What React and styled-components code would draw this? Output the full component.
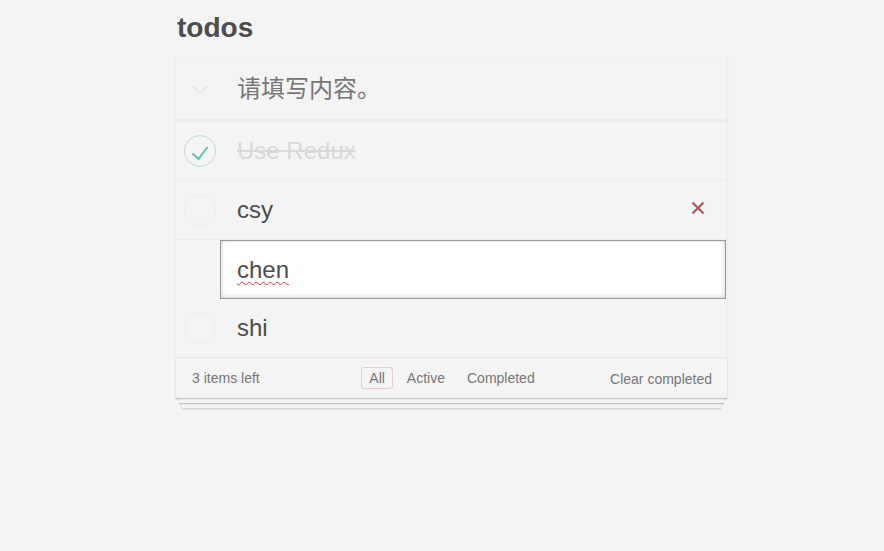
import React from "react";
import styled, { createGlobalStyle } from "styled-components";

const GlobalStyle = createGlobalStyle`
  html, body {
    margin: 0;
    padding: 0;
  }
  body {
    background: #f4f4f4;
    font-family: "Liberation Sans", Arial, "Noto Sans CJK SC", sans-serif;
    color: #4d4d4d;
  }
`;

const todos = [
  { id: 1, text: "Use Redux", completed: true },
  { id: 2, text: "csy", completed: false, hover: true },
  { id: 3, text: "chen", completed: false, editing: true },
  { id: 4, text: "shi", completed: false },
];

function App() {
  const left = todos.filter((t) => !t.completed).length;

  return (
    <Page>
      <GlobalStyle />
      <Title>todos</Title>
      <TodoApp>
        <Header>
          <ToggleAll>
            <svg width="20" height="12" viewBox="0 0 20 12">
              <path d="M2 2 L10 9 L18 2" fill="none" stroke="#e6e6e6" strokeWidth="2" />
            </svg>
          </ToggleAll>
          <NewTodo placeholder="请填写内容。" />
        </Header>
        <TodoList>
          {todos.map((todo) =>
            todo.editing ? (
              <EditRow key={todo.id}>
                <EditBox>
                  <Misspelled>{todo.text}</Misspelled>
                </EditBox>
              </EditRow>
            ) : (
              <Row key={todo.id}>
                <Toggle>
                  <svg width="34" height="34" viewBox="0 0 34 34">
                    <circle
                      cx="17"
                      cy="17"
                      r="15.5"
                      fill="none"
                      stroke={todo.completed ? "#bddad5" : "#ededed"}
                      strokeWidth="1"
                    />
                    {todo.completed && (
                      <path
                        d="M9.5 19.5 L15.5 25 L24.5 13"
                        fill="none"
                        stroke="#5dc2af"
                        strokeWidth="2"
                      />
                    )}
                  </svg>
                </Toggle>
                <Label $done={todo.completed}>{todo.text}</Label>
                {todo.hover && (
                  <Destroy>
                    <svg width="14" height="14" viewBox="0 0 14 14">
                      <path d="M1.5 1.5 L12.5 12.5 M12.5 1.5 L1.5 12.5" stroke="#af5b5e" strokeWidth="2.4" />
                    </svg>
                  </Destroy>
                )}
              </Row>
            )
          )}
        </TodoList>
        <Footer>
          <Count>{left} items left</Count>
          <Filters>
            <FilterLink $selected>All</FilterLink>
            <FilterLink>Active</FilterLink>
            <FilterLink>Completed</FilterLink>
          </Filters>
          <ClearButton>Clear completed</ClearButton>
        </Footer>
      </TodoApp>
    </Page>
  );
}

const Page = styled.div`
  box-sizing: border-box;
  min-height: 100vh;
  padding: 0 0 40px 176px;
  width: 727px;
`;

const Title = styled.h1`
  margin: 0;
  padding: 8px 0 9px 1px;
  height: 40px;
  font-size: 28px;
  line-height: 40px;
  font-weight: bold;
  color: #4d4d4d;
`;

const TodoApp = styled.section`
  background: #f4f4f4;
  box-shadow: 0 1px 3px rgba(0, 0, 0, 0.08);
`;

const Header = styled.header`
  display: flex;
  align-items: center;
  height: 65px;
  box-sizing: border-box;
  box-shadow: inset 0 -2px 1px rgba(0, 0, 0, 0.03);
  border-bottom: 1px solid #ececec;
`;

const ToggleAll = styled.div`
  width: 48px;
  display: flex;
  justify-content: center;
  padding-top: 2px;
  flex: none;
`;

const NewTodo = styled.input`
  flex: 1;
  border: none;
  outline: none;
  background: transparent;
  padding: 0 16px 0 13px;
  font-size: 24px;
  line-height: 1.4;
  color: #4d4d4d;
  font-family: "Liberation Sans", Arial, "Noto Sans CJK SC", sans-serif;

  &::placeholder {
    color: #767676;
    font-family: "Noto Sans CJK SC", sans-serif;
  }
`;

const TodoList = styled.ul`
  margin: 0;
  padding: 0;
  list-style: none;
`;

const Row = styled.li`
  display: flex;
  align-items: center;
  height: 59px;
  box-sizing: border-box;
  border-bottom: 1px solid #ededed;
  padding-right: 22px;

  &:last-child {
    border-bottom: none;
    height: 58px;
  }
`;

const Toggle = styled.div`
  width: 48px;
  flex: none;
  display: flex;
  justify-content: center;
`;

const Label = styled.label`
  flex: 1;
  padding-left: 13px;
  font-size: 24px;
  line-height: 1.2;
  color: ${(p) => (p.$done ? "#d9d9d9" : "#4d4d4d")};
  text-decoration: ${(p) => (p.$done ? "line-through" : "none")};
`;

const Destroy = styled.button`
  border: none;
  background: none;
  padding: 0;
  width: 14px;
  height: 14px;
  margin-top: -4px;
  display: flex;
  cursor: pointer;
`;

const EditRow = styled.li`
  height: 59px;
  padding: 0 1px 0 44px;
`;

const EditBox = styled.div`
  height: 59px;
  box-sizing: border-box;
  border: 1px solid #999;
  background: #fff;
  box-shadow: inset 0 -1px 5px 0 rgba(0, 0, 0, 0.2);
  padding: 0 16px;
  display: flex;
  align-items: center;
  font-size: 24px;
  color: #4d4d4d;
`;

const Misspelled = styled.span`
  text-decoration: underline wavy #e53935;
  text-decoration-thickness: 1px;
  text-underline-offset: 3px;
`;

const Footer = styled.footer`
  display: grid;
  grid-template-columns: 1fr auto 1fr;
  align-items: center;
  height: 41px;
  box-sizing: border-box;
  padding: 0 15px 0 16px;
  border-top: 1px solid #e6e6e6;
  background: #f4f4f4;
  font-size: 14px;
  color: #777;
  box-shadow: 0 1px 1px rgba(0, 0, 0, 0.2), 0 8px 0 -3px #f4f4f4,
    0 9px 1px -3px rgba(0, 0, 0, 0.2), 0 16px 0 -6px #f4f4f4,
    0 17px 2px -6px rgba(0, 0, 0, 0.2);
`;

const Count = styled.span`
  justify-self: start;
`;

const Filters = styled.ul`
  display: flex;
  margin: 0;
  padding: 0;
  list-style: none;
`;

const FilterLink = styled.li`
  margin: 3px;
  padding: 2px 7px;
  border-radius: 3px;
  line-height: 16px;
  border: 1px solid ${(p) => (p.$selected ? "rgba(175, 47, 47, 0.2)" : "transparent")};
  color: #777;
`;

const ClearButton = styled.button`
  justify-self: end;
  border: none;
  background: none;
  padding: 0;
  margin-top: 1px;
  font-family: inherit;
  font-size: 14px;
  color: #777;
  cursor: pointer;
`;

export default App;
